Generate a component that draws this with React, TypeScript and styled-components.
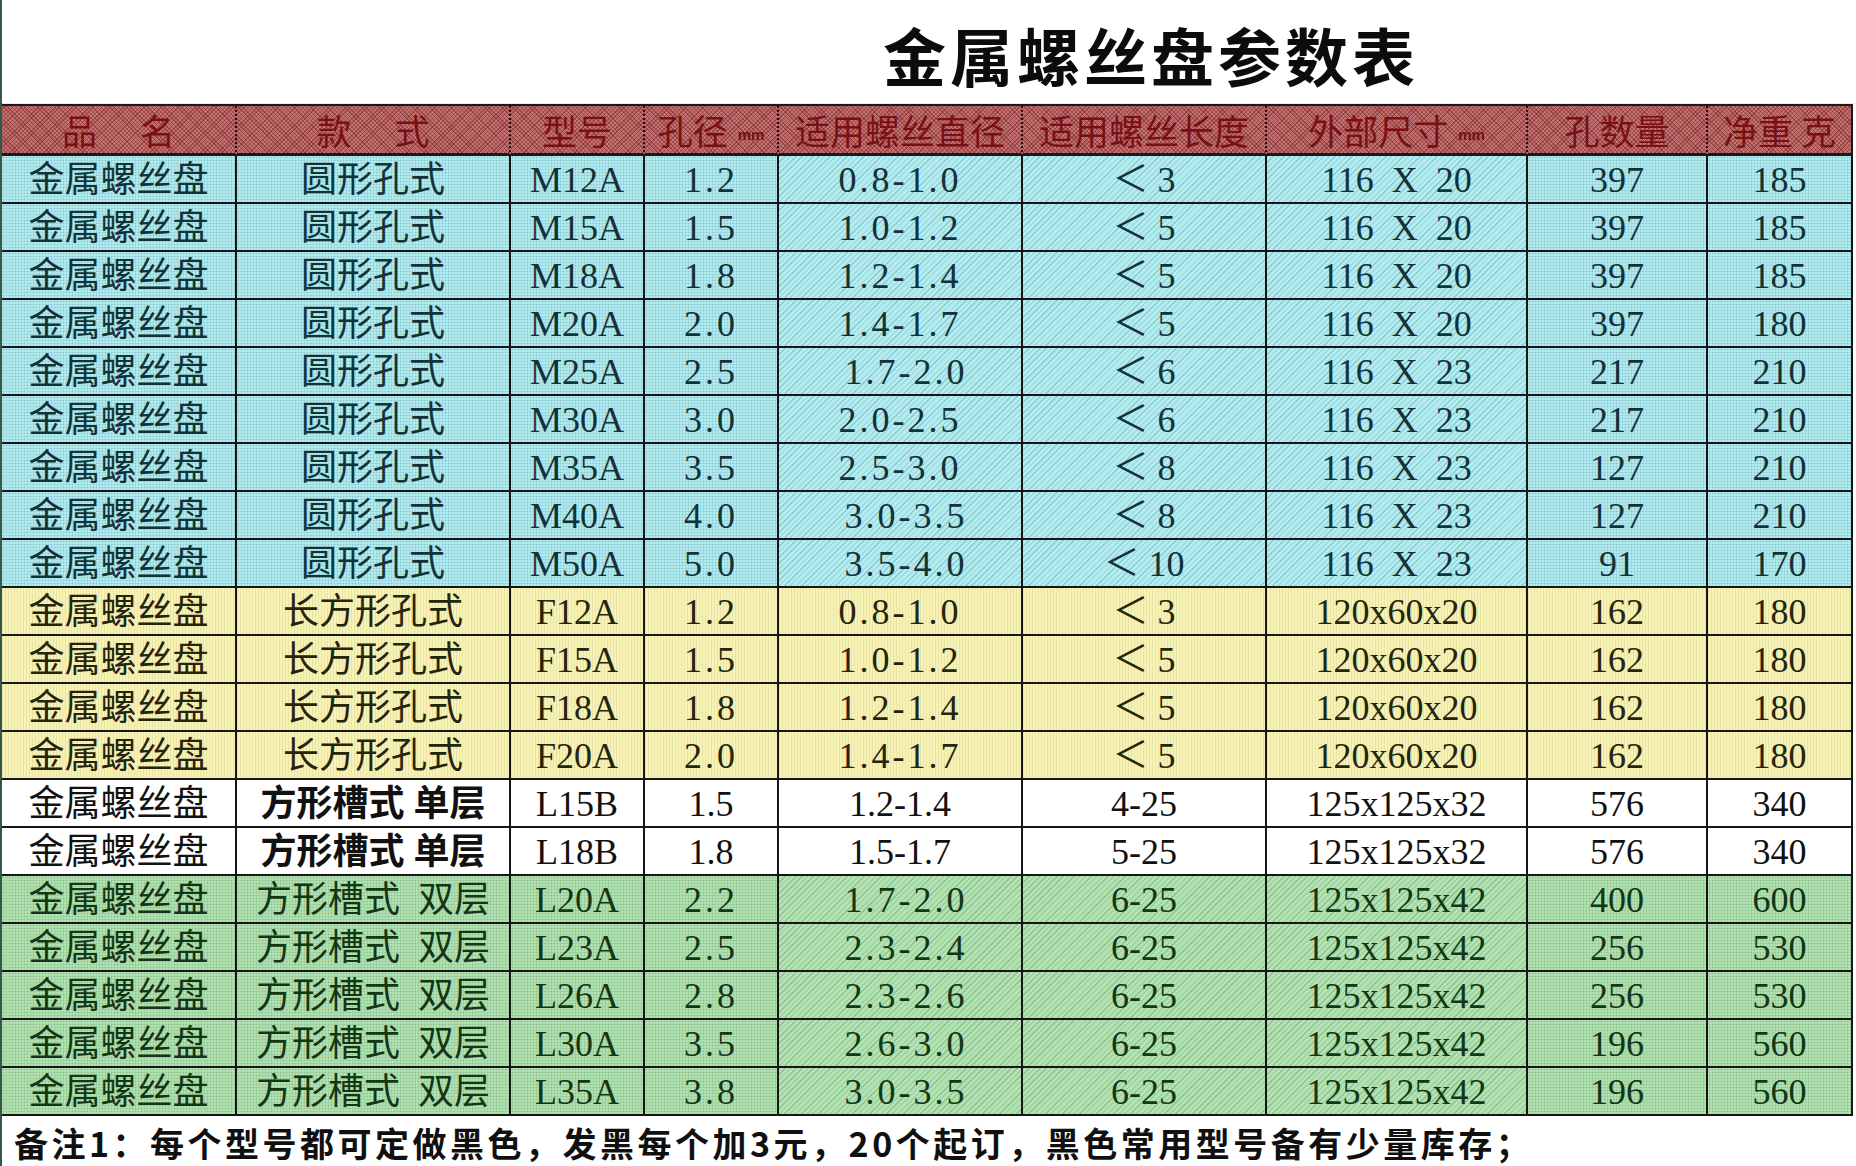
import styled, { createGlobalStyle, css } from 'styled-components';

const GlobalStyle = createGlobalStyle`
  html, body {
    margin: 0;
    padding: 0;
    background: #ffffff;
  }
  body {
    font-family: "Liberation Serif", "Noto Sans CJK SC", serif;
  }
`;

type Tone = 'blue' | 'yellow' | 'white' | 'green';
type Pattern = 'dot' | 'diag';

const tones: Record<Tone, { base: string; ink: string; line: string }> = {
  blue: { base: '#b2ebf0', ink: '#123236', line: 'rgba(20, 95, 105, 0.22)' },
  yellow: { base: '#f7f2b6', ink: '#25240c', line: 'rgba(160, 150, 70, 0.16)' },
  white: { base: '#ffffff', ink: '#111111', line: 'transparent' },
  green: { base: '#b3e2b2', ink: '#133614', line: 'rgba(30, 105, 45, 0.24)' },
};

const cellBackground = (tone: Tone, pattern: Pattern) => {
  const t = tones[tone];
  if (tone === 'white') return css`background: ${t.base};`;
  if (tone === 'yellow') {
    return css`
      background: repeating-linear-gradient(90deg, ${t.line} 0 1px, transparent 1px 3px), ${t.base};
    `;
  }
  if (pattern === 'diag') {
    return css`
      background: repeating-linear-gradient(135deg, ${t.line} 0 1px, transparent 1px 4px), ${t.base};
    `;
  }
  return css`
    background: radial-gradient(${t.line} 0.8px, transparent 1.2px) 0 0 / 3px 3px, ${t.base};
  `;
};

const Page = styled.div`
  width: 1856px;
  height: 1166px;
  box-sizing: border-box;
  border-left: 2px solid #34574a;
  display: flex;
  flex-direction: column;
  overflow: hidden;
`;

const TitleBar = styled.div`
  height: 104px;
  box-sizing: border-box;
  display: flex;
  align-items: center;
  justify-content: center;
  padding: 4px 0 0 444px;
  border-bottom: 1px dotted #d8d8d8;
`;

const Title = styled.h1`
  margin: 0;
  font-family: "Noto Sans CJK SC", sans-serif;
  font-size: 63px;
  font-weight: 700;
  line-height: 1;
  color: #0c0c0c;
  letter-spacing: 4px;
`;

const Grid = styled.div`
  display: grid;
  grid-template-columns: 235px 274px 134px 134px 244px 244px 261px 180px 145px;
  grid-template-rows: 50px repeat(20, 48px);
  border-top: 2px solid #1a1a1a;
  width: 1851px;
`;

const HeadCell = styled.div<{ $last?: boolean }>`
  box-sizing: border-box;
  display: flex;
  align-items: center;
  justify-content: center;
  gap: 10px;
  border-bottom: 3px solid #1a1a1a;
  border-right: ${(p) => (p.$last ? '2px solid #1a1a1a' : '2px dotted #2a0d0d')};
  background:
    repeating-linear-gradient(45deg, rgba(105, 20, 20, 0.4) 0 1px, transparent 1px 3px),
    repeating-linear-gradient(-45deg, rgba(105, 20, 20, 0.4) 0 1px, transparent 1px 3px),
    #c47373;
  color: #7a1014;
  font-family: "Noto Sans CJK SC", sans-serif;
  font-size: 35px;
  line-height: 1;
  white-space: nowrap;
`;

const Unit = styled.span`
  font-family: "Liberation Sans", sans-serif;
  font-size: 15px;
  font-weight: 700;
  color: #6e1014;
  align-self: center;
  margin-top: 10px;
`;

const Cell = styled.div<{ $tone: Tone; $pattern: Pattern; $bold?: boolean; $wide?: boolean }>`
  box-sizing: border-box;
  display: flex;
  align-items: center;
  justify-content: center;
  border-right: 2px solid #161616;
  border-bottom: 2px solid #161616;
  ${(p) => cellBackground(p.$tone, p.$pattern)}
  color: ${(p) => tones[p.$tone].ink};
  font-family: "Liberation Serif", "Noto Sans CJK SC", serif;
  font-size: 36px;
  font-weight: ${(p) => (p.$bold ? 700 : 400)};
  letter-spacing: ${(p) => (p.$wide ? '3px' : '0')};
  line-height: 1;
  white-space: pre;
  padding-top: 2px;
`;

const Note = styled.div`
  flex: 1;
  display: flex;
  align-items: center;
  padding: 4px 0 0 12px;
  font-family: "Noto Sans CJK SC", sans-serif;
  font-size: 34px;
  font-weight: 700;
  line-height: 1;
  color: #101010;
  letter-spacing: 3.5px;
  white-space: nowrap;
`;

type Row = [string, string, string, string, string, string, string];

const groups: { tone: Tone; style: string; bold?: boolean; rows: Row[] }[] = [
  {
    tone: 'blue',
    style: '圆形孔式',
    rows: [
      ['M12A', '1.2', '0.8-1.0', '＜ 3', '116  X  20', '397', '185'],
      ['M15A', '1.5', '1.0-1.2', '＜ 5', '116  X  20', '397', '185'],
      ['M18A', '1.8', '1.2-1.4', '＜ 5', '116  X  20', '397', '185'],
      ['M20A', '2.0', '1.4-1.7', '＜ 5', '116  X  20', '397', '180'],
      ['M25A', '2.5', ' 1.7-2.0', '＜ 6', '116  X  23', '217', '210'],
      ['M30A', '3.0', '2.0-2.5', '＜ 6', '116  X  23', '217', '210'],
      ['M35A', '3.5', '2.5-3.0', '＜ 8', '116  X  23', '127', '210'],
      ['M40A', '4.0', ' 3.0-3.5', '＜ 8', '116  X  23', '127', '210'],
      ['M50A', '5.0', ' 3.5-4.0', '＜ 10', '116  X  23', '91', '170'],
    ],
  },
  {
    tone: 'yellow',
    style: '长方形孔式',
    rows: [
      ['F12A', '1.2', '0.8-1.0', '＜ 3', '120x60x20', '162', '180'],
      ['F15A', '1.5', '1.0-1.2', '＜ 5', '120x60x20', '162', '180'],
      ['F18A', '1.8', '1.2-1.4', '＜ 5', '120x60x20', '162', '180'],
      ['F20A', '2.0', '1.4-1.7', '＜ 5', '120x60x20', '162', '180'],
    ],
  },
  {
    tone: 'white',
    style: '方形槽式 单层',
    bold: true,
    rows: [
      ['L15B', '1.5', '1.2-1.4', '4-25', '125x125x32', '576', '340'],
      ['L18B', '1.8', '1.5-1.7', '5-25', '125x125x32', '576', '340'],
    ],
  },
  {
    tone: 'green',
    style: '方形槽式  双层',
    rows: [
      ['L20A', '2.2', ' 1.7-2.0', '6-25', '125x125x42', '400', '600'],
      ['L23A', '2.5', ' 2.3-2.4', '6-25', '125x125x42', '256', '530'],
      ['L26A', '2.8', ' 2.3-2.6', '6-25', '125x125x42', '256', '530'],
      ['L30A', '3.5', ' 2.6-3.0', '6-25', '125x125x42', '196', '560'],
      ['L35A', '3.8', ' 3.0-3.5', '6-25', '125x125x42', '196', '560'],
    ],
  },
];

// dotted screen for the plain columns, diagonal hatch for the three middle ones
const patterns: Pattern[] = ['dot', 'dot', 'dot', 'dot', 'diag', 'diag', 'diag', 'dot', 'dot'];

const App = () => {
  return (
    <>
      <GlobalStyle />
      <Page>
        <TitleBar>
          <Title>金属螺丝盘参数表</Title>
        </TitleBar>
        <Grid>
          <HeadCell>品　 名</HeadCell>
          <HeadCell>款　 式</HeadCell>
          <HeadCell>型号</HeadCell>
          <HeadCell>
            孔径<Unit>mm</Unit>
          </HeadCell>
          <HeadCell>适用螺丝直径</HeadCell>
          <HeadCell>适用螺丝长度</HeadCell>
          <HeadCell>
            外部尺寸<Unit>mm</Unit>
          </HeadCell>
          <HeadCell>孔数量</HeadCell>
          <HeadCell $last>净重 克</HeadCell>
          {groups.map((g) =>
            g.rows.map((r) => {
              const values = ['金属螺丝盘', g.style, ...r];
              return values.map((v, i) => (
                <Cell
                  key={r[0] + i}
                  $tone={g.tone}
                  $pattern={patterns[i]}
                  $bold={g.bold && i === 1}
                  $wide={(i === 3 || i === 4) && g.tone !== 'white'}
                >
                  {v}
                </Cell>
              ));
            })
          )}
        </Grid>
        <Note>备注1：每个型号都可定做黑色，发黑每个加3元，20个起订，黑色常用型号备有少量库存；</Note>
      </Page>
    </>
  );
};

export default App;
